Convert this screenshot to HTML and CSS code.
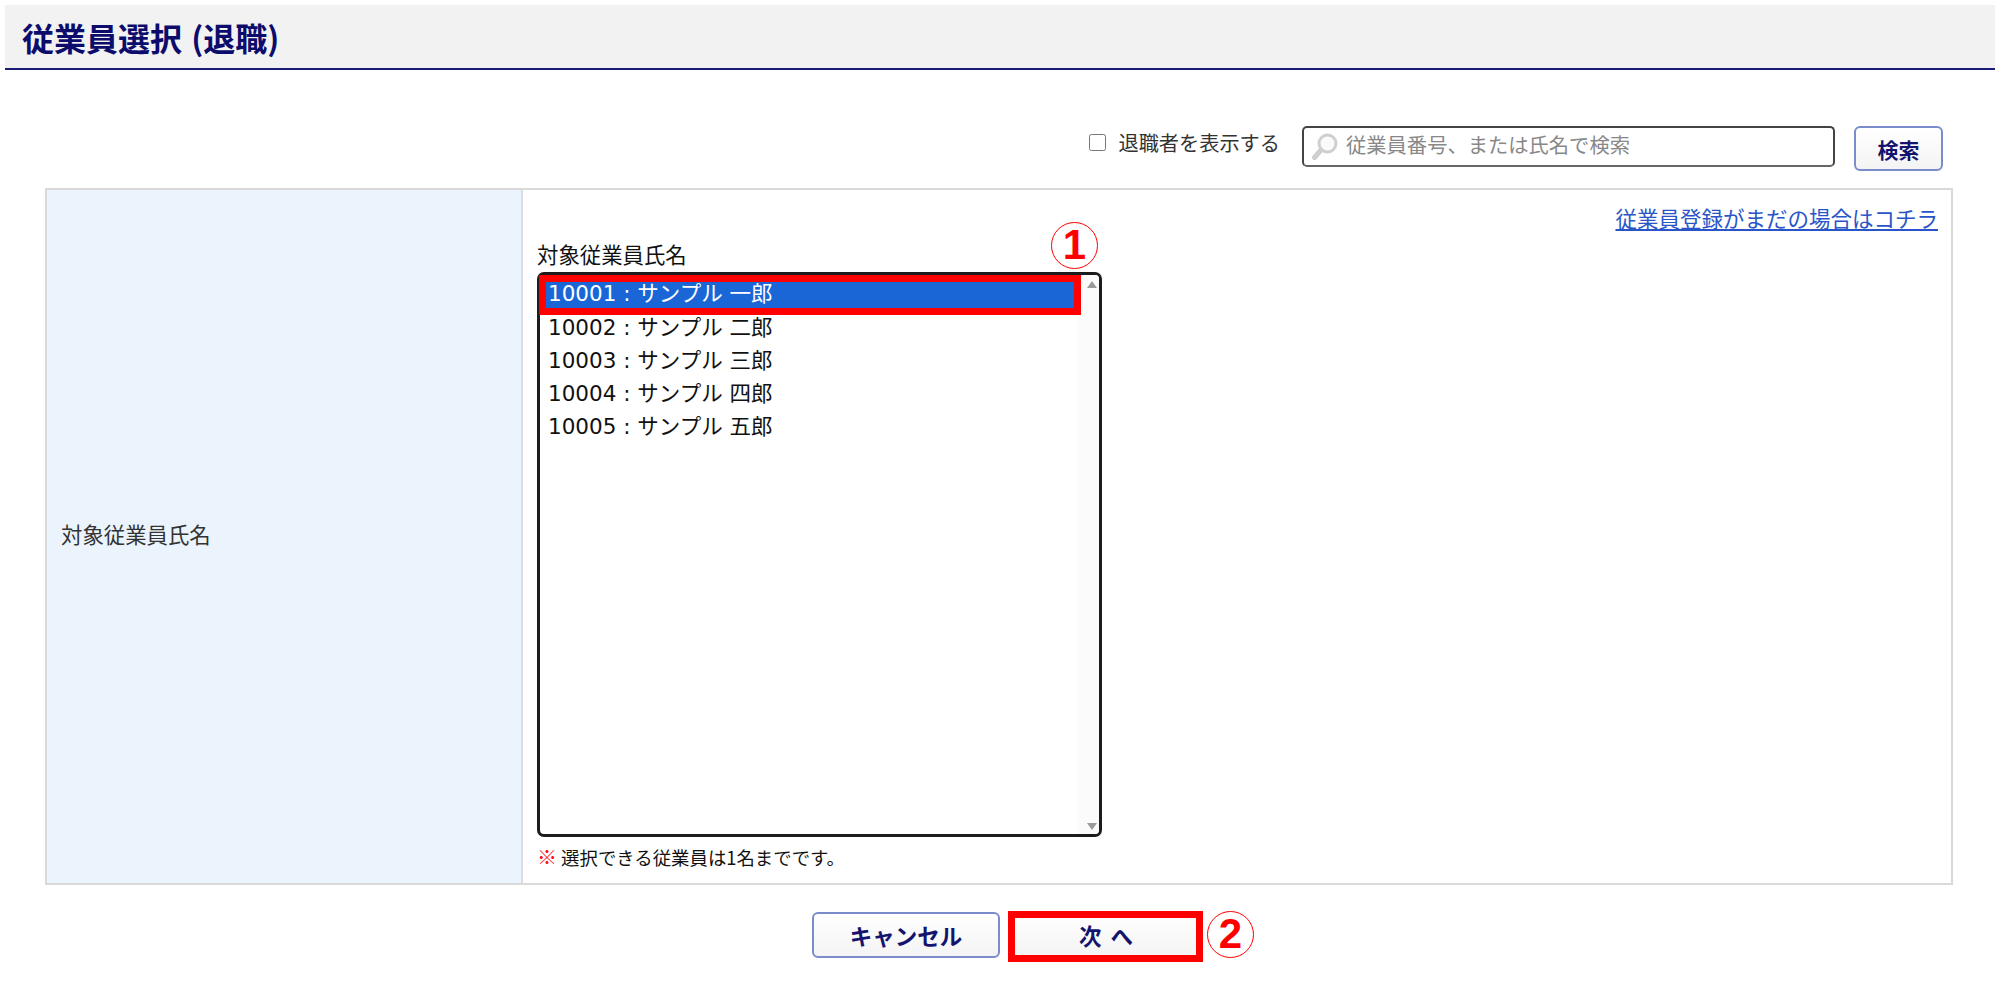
FILE: index.html
```html
<!DOCTYPE html>
<html lang="ja">
<head>
<meta charset="utf-8">
<title>従業員選択 (退職)</title>
<link rel="stylesheet" href="styles.css">
</head>
<body>
<div class="page">
  <header class="head"><h1 class="title">従業員選択 (退職)</h1></header>
  <main class="content">
    <div class="toolbar">
      <label class="retired"><input class="check" type="checkbox"><span>退職者を表示する</span></label>
      <div class="search">
        <svg class="lens" viewBox="0 0 26 28" width="26" height="28" aria-hidden="true">
          <circle cx="15.5" cy="10.5" r="8.5" fill="#fafafa" stroke="#cfcfcf" stroke-width="3"/>
          <path d="M9 17 L2.5 24.5" stroke="#cfcfcf" stroke-width="5" stroke-linecap="round"/>
        </svg>
        <input class="search-input" type="text" placeholder="従業員番号、または氏名で検索">
      </div>
      <button class="btn btn-search" type="button">検索</button>
    </div>
    <div class="form">
      <div class="form-label">対象従業員氏名</div>
      <div class="form-body">
        <div class="link-row"><a class="link" href="#">従業員登録がまだの場合はコチラ</a></div>
        <div class="field-label">対象従業員氏名</div>
        <div class="list-wrap">
          <div class="list">
            <div class="rows">
              <div class="row row-selected">10001 : サンプル 一郎</div>
              <div class="row">10002 : サンプル 二郎</div>
              <div class="row">10003 : サンプル 三郎</div>
              <div class="row">10004 : サンプル 四郎</div>
              <div class="row">10005 : サンプル 五郎</div>
            </div>
            <div class="scrollbar"><span class="arrow-up"></span><span class="arrow-down"></span></div>
          </div>
          <div class="ring ring-list"></div>
          <div class="mark mark-1">1</div>
        </div>
        <p class="note"><span class="note-mark">※</span> 選択できる従業員は1名までです。</p>
      </div>
    </div>
    <div class="actions">
      <button class="btn btn-action" type="button">キャンセル</button>
      <div class="next-wrap">
        <button class="btn btn-action btn-next" type="button">次 へ</button>
        <div class="ring ring-next"></div>
        <div class="mark mark-2">2</div>
      </div>
    </div>
  </main>
</div>
</body>
</html>
```
FILE: styles.css
```css
* { box-sizing: border-box; }
html, body { margin: 0; padding: 0; background: #fff; }
body {
  font-family: "DejaVu Sans", "Noto Sans CJK JP", sans-serif;
  font-size: 21px;
  color: #222;
  height: 998px;
  overflow: hidden;
}
.page { padding: 5px 0 0 5px; }
.head {
  height: 65px;
  background: #f2f2f2;
  border-bottom: 2px solid #1b1b78;
  display: flex;
  align-items: center;
  padding-left: 17px;
}
.title {
  margin: 0;
  font-family: "Noto Sans CJK JP", sans-serif;
  font-size: 32px;
  font-weight: 700;
  word-spacing: 2px;
  color: #0c0c6c;
  line-height: 40px;
}
.content { padding: 56px 42px 0 40px; }
.toolbar {
  display: flex;
  align-items: flex-start;
  justify-content: flex-end;
  height: 62px;
  padding-right: 10px;
}
.retired {
  display: flex;
  align-items: center;
  height: 33px;
  margin-right: 22px;
  font-family: "Noto Sans CJK JP", sans-serif;
  font-size: 20.2px;
  color: #333;
}
.check {
  width: 17px;
  height: 17px;
  margin: 0 12px 0 0;
}
.search {
  display: flex;
  align-items: center;
  width: 533px;
  height: 41px;
  border: 2px solid #444;
  border-bottom-color: #666;
  border-radius: 5px;
  background: #fff;
  padding-left: 8px;
  margin-right: 19px;
}
.lens { flex: none; margin-right: 8px; }
.search-input {
  flex: 1;
  min-width: 0;
  height: 100%;
  border: 0;
  outline: 0;
  padding: 0 0 5px;
  background: transparent;
  font-family: "Noto Sans CJK JP", sans-serif;
  font-size: 20.3px;
}
.search-input::placeholder { color: #888; opacity: 1; }
.btn {
  font-family: "Noto Sans CJK JP", sans-serif;
  font-weight: 700;
  color: #14146e;
  background: linear-gradient(#ffffff, #f4f4f4);
  border: 2px solid #7b8cca;
  border-radius: 6px;
  padding: 0;
  cursor: pointer;
}
.btn-search { width: 89px; height: 45px; font-size: 21px; }
.btn-action { width: 188px; height: 46px; font-size: 22.5px; display: block; }
.btn-next { word-spacing: 4px; }
.form {
  display: grid;
  grid-template-columns: 476px 1fr;
  height: 697px;
  border: 2px solid #d9d9d9;
}
.form-label {
  display: flex;
  align-items: center;
  background: #ebf4fc;
  border-right: 2px solid #d9dde2;
  padding: 0 0 7px 14px;
  font-family: "Noto Sans CJK JP", sans-serif;
  font-size: 21.4px;
  color: #333;
}
.form-body { padding: 14px 13px 0 14px; }
.link-row {
  display: flex;
  justify-content: flex-end;
  height: 30px;
  line-height: 28px;
}
.link {
  font-family: "Noto Sans CJK JP", sans-serif;
  font-size: 21.5px;
  color: #2a55c8;
  text-decoration: underline;
}
.field-label {
  margin-top: 6px;
  height: 28px;
  line-height: 28px;
  font-family: "Noto Sans CJK JP", sans-serif;
  font-size: 21.4px;
  color: #111;
}
.list-wrap { position: relative; width: 565px; margin-top: 4px; }
.list {
  display: flex;
  height: 565px;
  border: 3px solid #1c1c1c;
  border-radius: 7px;
  overflow: hidden;
}
.rows { flex: 1; padding: 4px 3px 0 5px; min-width: 0; }
.row {
  height: 33px;
  line-height: 31px;
  padding-left: 3px;
  white-space: pre;
  color: #111;
  font-size: 21.5px;
}
.row-selected { height: 28px; line-height: 26px; margin: 2px 0 3px; background: #1a66d6; color: #fff; }
.scrollbar {
  position: relative;
  flex: none;
  width: 22px;
  background: #fbfbfb;
}
.arrow-up, .arrow-down {
  position: absolute;
  left: 10px;
  width: 0;
  height: 0;
  border-left: 5px solid transparent;
  border-right: 5px solid transparent;
}
.arrow-up { top: 6px; border-bottom: 7px solid #9a9a9a; }
.arrow-down { bottom: 4px; border-top: 7px solid #9a9a9a; }
.ring { position: absolute; border: 7px solid #ff0000; pointer-events: none; }
.ring-list { left: 2px; top: 3px; width: 542px; height: 40px; }
.ring-next { left: -4px; top: -1px; width: 195px; height: 51px; }
.mark {
  position: absolute;
  width: 47px;
  height: 47px;
  border: 1.5px solid #ff0000;
  border-radius: 50%;
  color: #ff0000;
  font-family: "Liberation Sans", sans-serif;
  font-weight: 700;
  font-size: 42px;
  line-height: 44px;
  text-align: center;
}
.mark-1 { left: 514px; top: -50px; }
.mark-2 { left: 195px; top: -1px; }
.note {
  margin: 6px 0 0;
  height: 26px;
  line-height: 28px;
  font-family: "Noto Sans CJK JP", sans-serif;
  font-size: 18.4px;
  color: #111;
}
.note-mark { color: #ff1010; font-weight: 700; font-size: 20px; }
.actions {
  display: flex;
  gap: 12px;
  margin-top: 27px;
  padding-left: 767px;
}
.next-wrap { position: relative; }
```
